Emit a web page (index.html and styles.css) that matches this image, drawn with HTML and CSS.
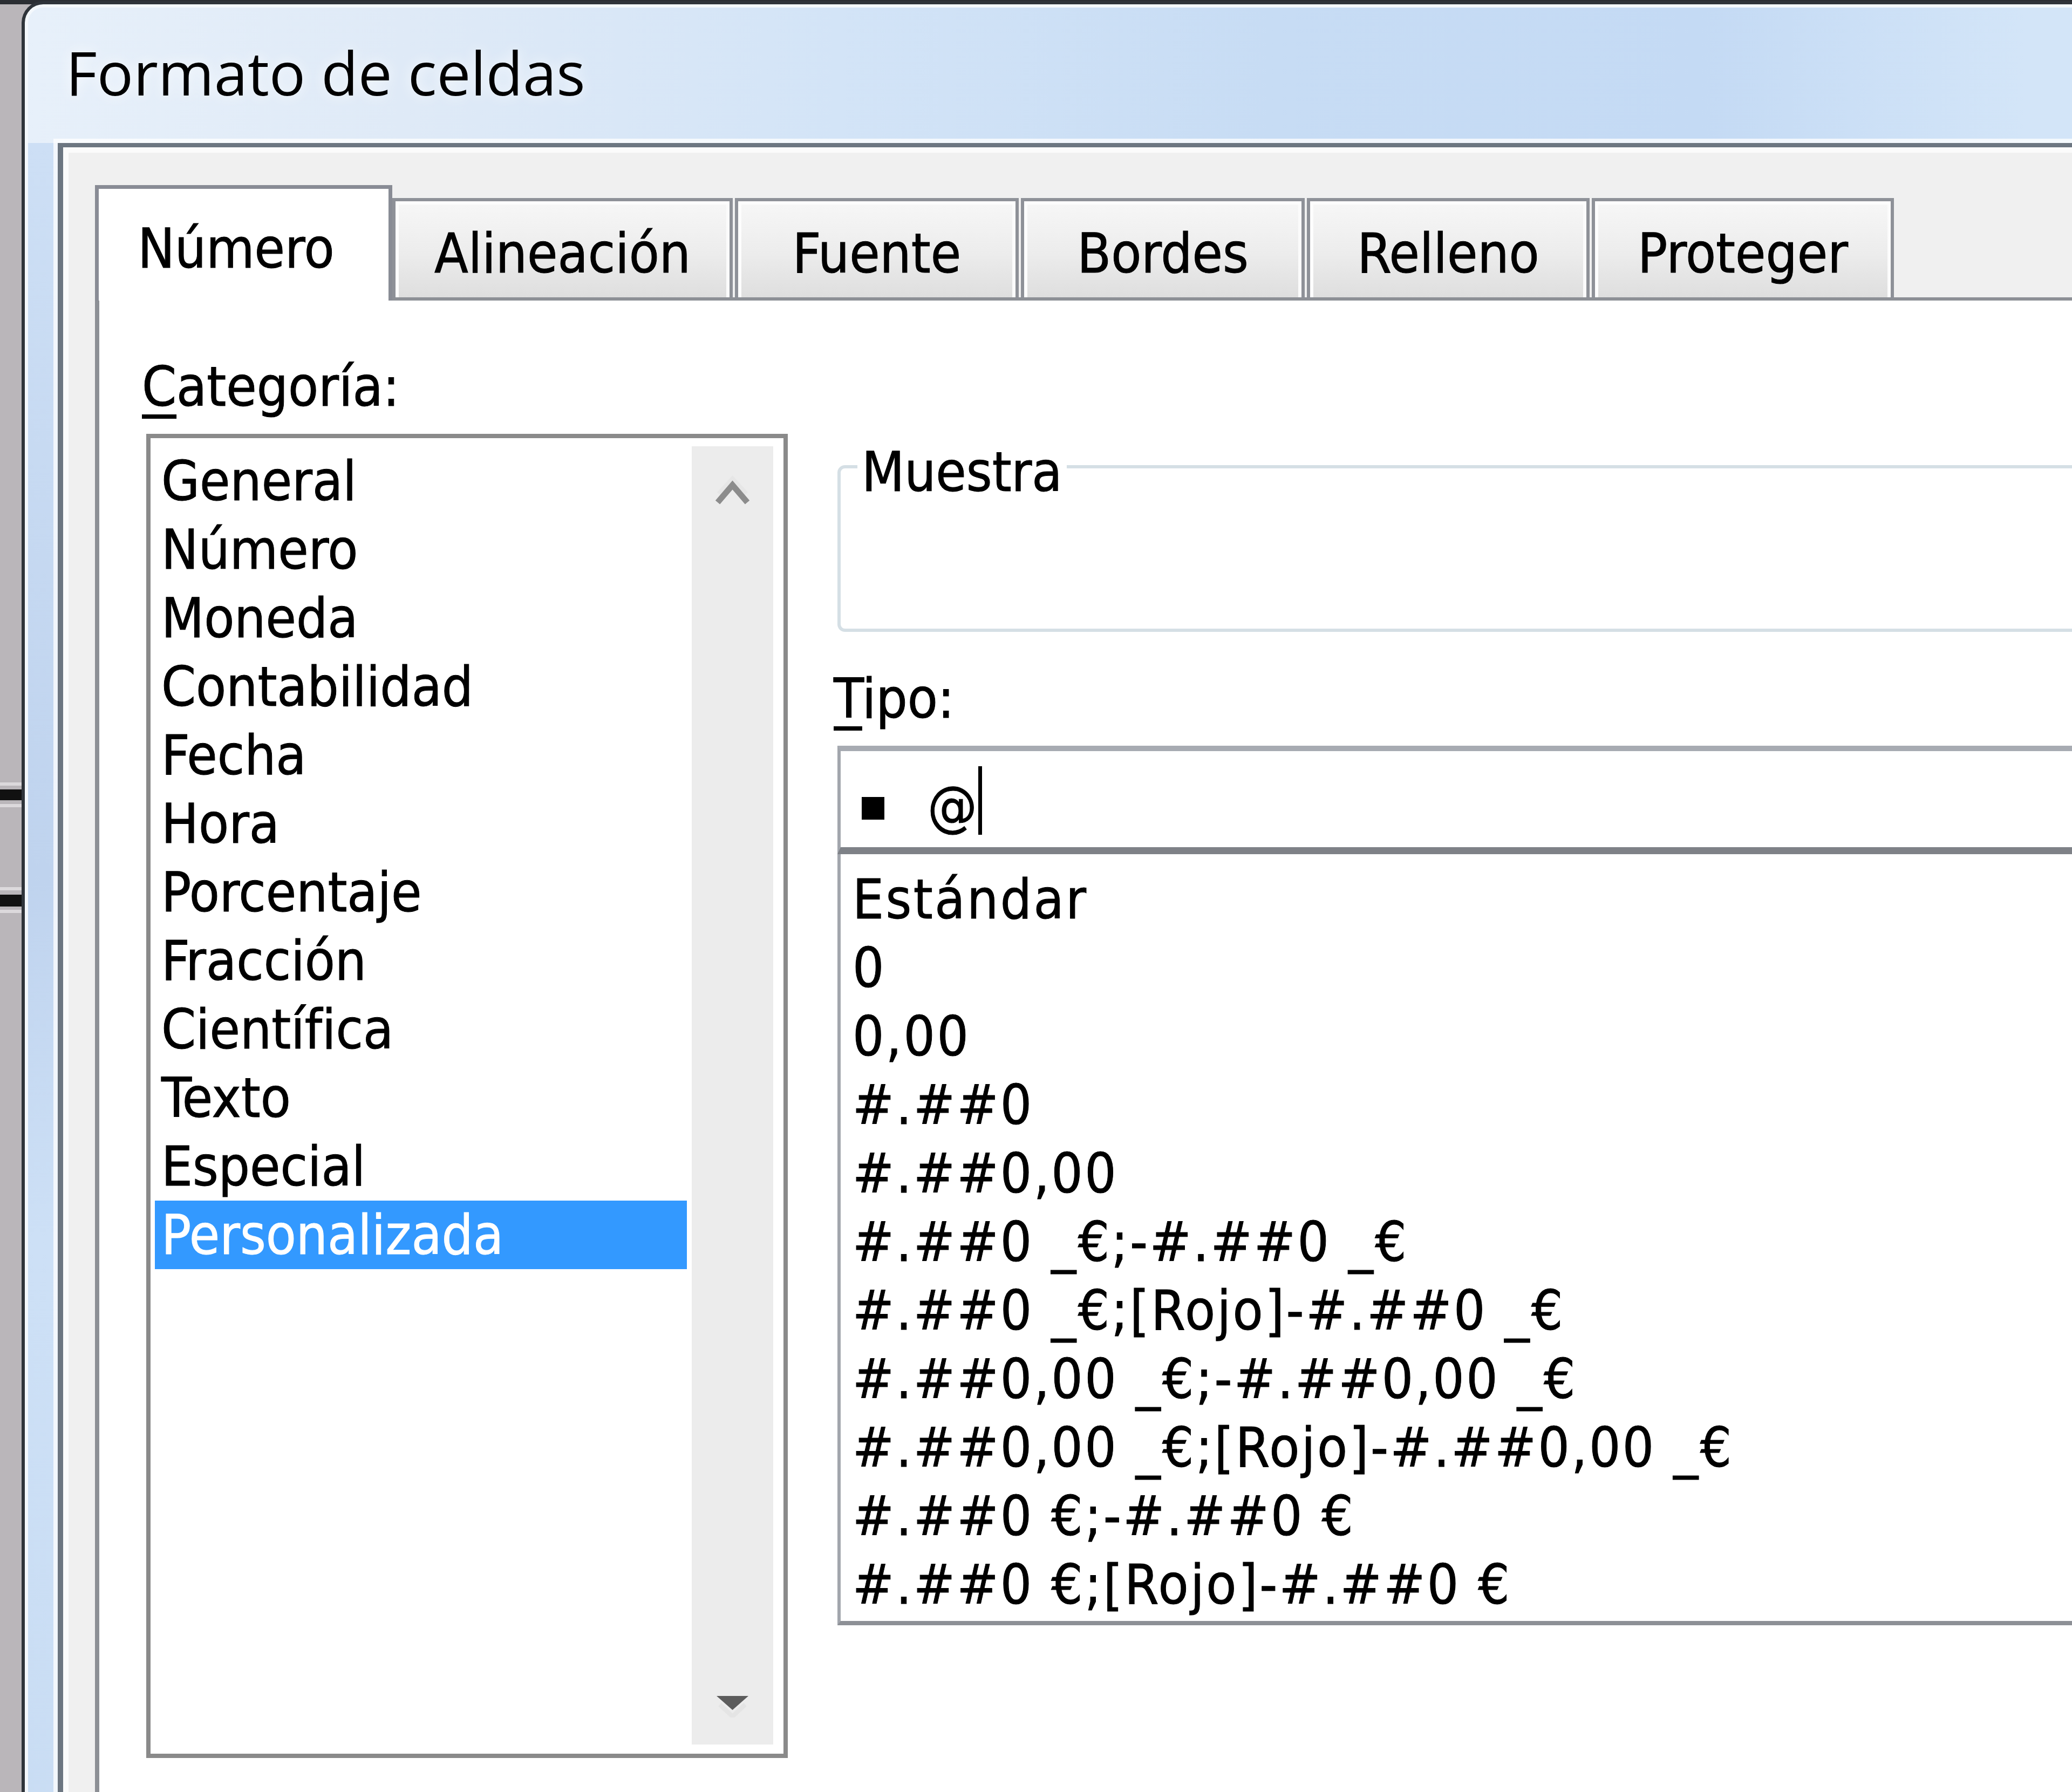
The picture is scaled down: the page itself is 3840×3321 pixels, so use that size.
FILE: index.html
```html
<!DOCTYPE html>
<html lang="es">
<head>
<meta charset="utf-8">
<title>Formato de celdas</title>
<link rel="stylesheet" href="styles.css">
</head>
<body>
<div class="desk">
  <div class="window">
    <div class="frame">
      <div class="titlebar">Formato de celdas</div>
      <div class="client">
        <div class="tabs">
          <div class="tab active tab-numero">Número</div>
          <div class="tab tab-alin">Alineación</div>
          <div class="tab tab-fuente">Fuente</div>
          <div class="tab tab-bordes">Bordes</div>
          <div class="tab tab-relleno">Relleno</div>
          <div class="tab tab-proteger">Proteger</div>
        </div>
        <div class="panel">
          <div class="col-left">
            <div class="label"><u>C</u>ategoría:</div>
            <div class="listbox">
              <ul class="items">
                <li>General</li>
                <li>Número</li>
                <li>Moneda</li>
                <li>Contabilidad</li>
                <li>Fecha</li>
                <li>Hora</li>
                <li>Porcentaje</li>
                <li>Fracción</li>
                <li>Científica</li>
                <li>Texto</li>
                <li>Especial</li>
                <li class="sel">Personalizada</li>
              </ul>
              <div class="vscroll">
                <svg class="arrow-up" width="151" height="60" viewBox="0 0 151 60">
                  <path d="M50 40 L75.5 12 L101 40" fill="none" stroke="#e6e6e6" stroke-width="8"/>
                  <path d="M48 56 L75.5 24 L103 56" fill="none" stroke="#8c8c8c" stroke-width="11"/>
                </svg>
                <svg class="arrow-down" width="151" height="60" viewBox="0 0 151 60">
                  <path d="M52 36 L75.5 58 L99 36" fill="none" stroke="#e4e4e4" stroke-width="8"/>
                  <path d="M46 20 L105 20 L75.5 46 Z" fill="#5c5c5c"/>
                </svg>
              </div>
            </div>
          </div>
          <div class="col-right">
            <div class="group">
              <div class="group-label">Muestra</div>
            </div>
            <div class="label label-tipo"><u>T</u>ipo:</div>
            <div class="input"><span class="glyph"></span><span class="at">@</span><span class="caret"></span></div>
            <ul class="formats">
              <li>Estándar</li>
              <li>0</li>
              <li>0,00</li>
              <li>#.##0</li>
              <li>#.##0,00</li>
              <li>#.##0 _€;-#.##0 _€</li>
              <li>#.##0 _€;[Rojo]-#.##0 _€</li>
              <li>#.##0,00 _€;-#.##0,00 _€</li>
              <li>#.##0,00 _€;[Rojo]-#.##0,00 _€</li>
              <li>#.##0 €;-#.##0 €</li>
              <li>#.##0 €;[Rojo]-#.##0 €</li>
            </ul>
          </div>
        </div>
      </div>
    </div>
  </div>
</div>
</body>
</html>
```
FILE: styles.css
```css
* { box-sizing: border-box; }

html, body {
  margin: 0;
  padding: 0;
}

body {
  width: 3840px;
  height: 3321px;
  overflow: hidden;
  background: #bab6ba;
  font-family: "DejaVu Sans Condensed", "Liberation Sans", sans-serif;
  font-size: 102px;
  color: #000;
  -webkit-text-stroke: 1px #000;
}

.desk {
  width: 3840px;
  height: 3321px;
  overflow: hidden;
  background:
    linear-gradient(#2b2e33 0 8px, transparent 8px),
    linear-gradient(transparent 1450px, #dcd9dc 1450px 1456px, transparent 1456px 1463px,
      #111 1463px 1483px, transparent 1483px 1490px, #dcd9dc 1490px 1496px,
      transparent 1496px 1644px, #dcd9dc 1644px 1650px, transparent 1650px 1658px,
      #111 1658px 1680px, transparent 1680px 1686px, #dcd9dc 1686px 1692px, transparent 1692px),
    #bab6ba;
}

.window {
  margin: 2px 0 0 40px;
  width: 3900px;
  height: 3400px;
  border-top: 6px solid #2f343a;
  border-left: 6px solid #2f343a;
  border-top-left-radius: 40px;
  background: #2f343a;
}

.frame {
  height: 100%;
  border-top: 6px solid #f4f8fc;
  border-left: 6px solid #f4f8fc;
  border-top-left-radius: 34px;
  display: flex;
  flex-direction: column;
  background:
    linear-gradient(#cddff5, #bfd3ee 40%, #cde0f6 60%, #c8dcf3) 0 251px / 55px 100% no-repeat,
    linear-gradient(90deg, #e7f0fa 0, #dfeaf7 700px, #d3e4f7 1500px, #c7dcf4 2300px, #c4daf4 3100px, #d3e5f8 3700px);
}

.titlebar {
  height: 251px;
  flex: none;
  padding: 50px 0 0 70px;
  font-family: "Open Sans", "Noto Sans", sans-serif;
  font-size: 112px;
  line-height: 140px;
  color: #000;
  -webkit-text-stroke: 0;
  text-shadow: 0 0 24px rgba(255, 255, 255, 0.9);
}

.client {
  flex: 1;
  margin-left: 55px;
  border-top: 8px solid #6c7681;
  border-left: 10px solid #6c7681;
  background: #f0f0f0;
  box-shadow: -8px -8px 0 rgba(255, 255, 255, 0.75), inset 10px 10px 0 #fbfbfb;
  padding: 70px 0 0 59px;
  display: flex;
  flex-direction: column;
}

/* Tabs */
.tabs {
  display: flex;
  align-items: flex-end;
  height: 208px;
  flex: none;
}

.tab {
  height: 184px;
  border: 6px solid #8e9198;
  border-bottom: 0;
  padding-top: 33px;
  line-height: 127px;
  text-align: center;
  white-space: nowrap;
  background: linear-gradient(#f7f7f7, #ececec 55%, #dedede);
  box-shadow: inset 6px 6px 0 #fdfdfd, inset -6px 0 0 #fbfbfb;
}

.tab.active {
  position: relative;
  z-index: 1;
  height: 214px;
  margin-bottom: -6px;
  border: 7px solid #898c95;
  border-bottom: 0;
  padding-top: 47px;
  padding-right: 28px;
  background: #fff;
  box-shadow: none;
}

.tab-numero { width: 551px; }
.tab-alin { width: 631px; }
.tab-fuente { width: 526px; margin-left: 4px; }
.tab-bordes { width: 526px; margin-left: 4px; }
.tab-relleno { width: 524px; margin-left: 4px; }
.tab-proteger { width: 560px; margin-left: 4px; }

/* Panel */
.panel {
  flex: 1;
  display: flex;
  border-top: 6px solid #8d9096;
  border-left: 8px solid #8d9096;
  background: #fff;
}

.label {
  line-height: 127px;
  height: 127px;
  white-space: nowrap;
}

.label u {
  text-decoration-thickness: 8px;
  text-underline-offset: 16px;
}

.col-left {
  flex: none;
  padding: 95.5px 0 0 79px;
}

.listbox {
  margin: 24.5px 0 0 8px;
  width: 1189px;
  height: 2454px;
  border: 8px solid #8a8a8a;
  display: flex;
  background: #fff;
}

.items {
  list-style: none;
  margin: 0;
  padding: 16px 0 0 8px;
  width: 994px;
  flex: none;
}

.items li {
  height: 127px;
  line-height: 127px;
  padding-left: 12px;
  white-space: nowrap;
}

.items li.sel {
  background: #3399ff;
  color: #fff;
  -webkit-text-stroke: 1px #fff;
}

.vscroll {
  flex: none;
  width: 151px;
  margin: 15px 19px 17px 9px;
  background: #ececec;
  display: flex;
  flex-direction: column;
  justify-content: space-between;
}

.arrow-up {
  display: block;
  margin-top: 48px;
}

.arrow-down {
  display: block;
  margin-bottom: 50px;
}

.col-right {
  flex: none;
  width: 2400px;
  margin-left: 85px;
  padding-top: 305px;
}

.group {
  margin-left: 7px;
  height: 309px;
  border: 6px solid #d5dfe5;
  border-radius: 14px;
  background: #fff;
}

.group-label {
  width: fit-content;
  margin: -57.5px 0 0 31px;
  padding: 0 8px;
  background: #fff;
  line-height: 127px;
  height: 127px;
}

.label-tipo {
  margin-top: 59.5px;
}

.input {
  margin: 24.5px 0 0 7px;
  height: 201px;
  border-top: 10px solid #a7abb2;
  border-left: 6px solid #a2a6ad;
  border-bottom: 13px solid #7e8187;
  padding: 28px 0 0 39px;
  line-height: 127px;
  white-space: nowrap;
  background: #fff;
}

.glyph {
  display: inline-block;
  width: 42px;
  height: 42px;
  background: #000;
  vertical-align: 10px;
}

.at {
  margin-left: 80px;
}

.caret {
  display: inline-block;
  width: 7px;
  height: 127px;
  margin-left: 2px;
  background: #000;
  vertical-align: -18px;
}

.formats {
  list-style: none;
  margin: 0 0 0 7px;
  height: 1429px;
  padding: 19.5px 0 0 22px;
  border-left: 6px solid #a2a6ad;
  border-bottom: 8px solid #8d9096;
  background: #fff;
}

.formats li {
  height: 127px;
  line-height: 127px;
  white-space: pre;
  letter-spacing: 3.5px;
}
```
